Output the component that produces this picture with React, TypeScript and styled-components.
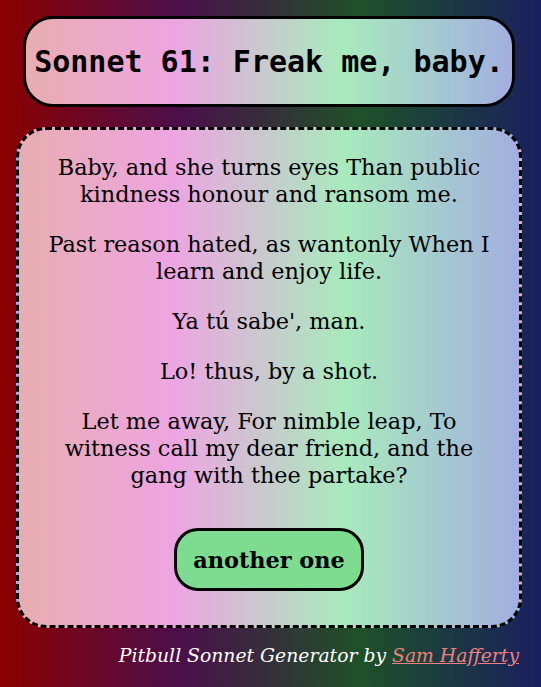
import React from "react";
import styled, { createGlobalStyle } from "styled-components";

const GlobalStyle = createGlobalStyle`
  html, body { margin: 0; padding: 0; }
  body {
    min-height: 100vh;
    background: linear-gradient(to right, #8b0000 0%, #4b0f4b 33.3%, #1e5128 66.7%, #19205f 100%);
    font-family: "DejaVu Serif", serif;
  }
`;

const cardGradient =
  "linear-gradient(to right, #e8adb0 0%, #eda5e1 31%, #a8eabc 65%, #a3aee0 100%)";

const Page = styled.div`
  display: flex;
  flex-direction: column;
  padding: 16px 19px 0 16px;
  box-sizing: border-box;
  min-height: 687px;
`;

const TitleBox = styled.header`
  margin: 0 7px;
  height: 91px;
  box-sizing: border-box;
  border: 3px solid #000;
  border-radius: 30px;
  background: ${cardGradient};
  display: flex;
  align-items: center;
  justify-content: center;
`;

const Title = styled.h1`
  margin: 0;
  font-family: "DejaVu Sans Mono", monospace;
  font-weight: bold;
  font-size: 30px;
  color: #000;
`;

const Card = styled.main`
  margin-top: 20px;
  height: 501px;
  box-sizing: border-box;
  border: 3px dashed #000;
  border-radius: 30px;
  background: ${cardGradient};
  padding: 24px 21px 34px;
  display: flex;
  flex-direction: column;
  align-items: center;
`;

const Verse = styled.p`
  margin: 0 0 23px;
  font-size: 22.4px;
  line-height: 27px;
  text-align: center;
  color: #000;
`;

const Button = styled.button`
  margin-top: 16px;
  width: 190px;
  height: 66px;
  border: 3px solid #000;
  border-radius: 24px;
  background: #7ddc8f;
  font-family: "DejaVu Serif", serif;
  font-weight: bold;
  font-size: 22.4px;
  color: #000;
  cursor: pointer;
`;

const Footer = styled.footer`
  margin-top: 17px;
  padding-right: 3px;
  text-align: right;
  font-style: italic;
  font-size: 18.8px;
  color: #fff;
`;

const Link = styled.a`
  color: #f08080;
  text-decoration: underline;
`;

const verses = [
  "Baby, and she turns eyes Than public kindness honour and ransom me.",
  "Past reason hated, as wantonly When I learn and enjoy life.",
  "Ya tú sabe', man.",
  "Lo! thus, by a shot.",
  "Let me away, For nimble leap, To witness call my dear friend, and the gang with thee partake?",
];

export default function App() {
  return (
    <>
      <GlobalStyle />
      <Page>
        <TitleBox>
          <Title>Sonnet 61: Freak me, baby.</Title>
        </TitleBox>
        <Card>
          {verses.map((v, i) => (
            <Verse key={i}>{v}</Verse>
          ))}
          <Button>another one</Button>
        </Card>
        <Footer>
          Pitbull Sonnet Generator by <Link href="#">Sam Hafferty</Link>
        </Footer>
      </Page>
    </>
  );
}
